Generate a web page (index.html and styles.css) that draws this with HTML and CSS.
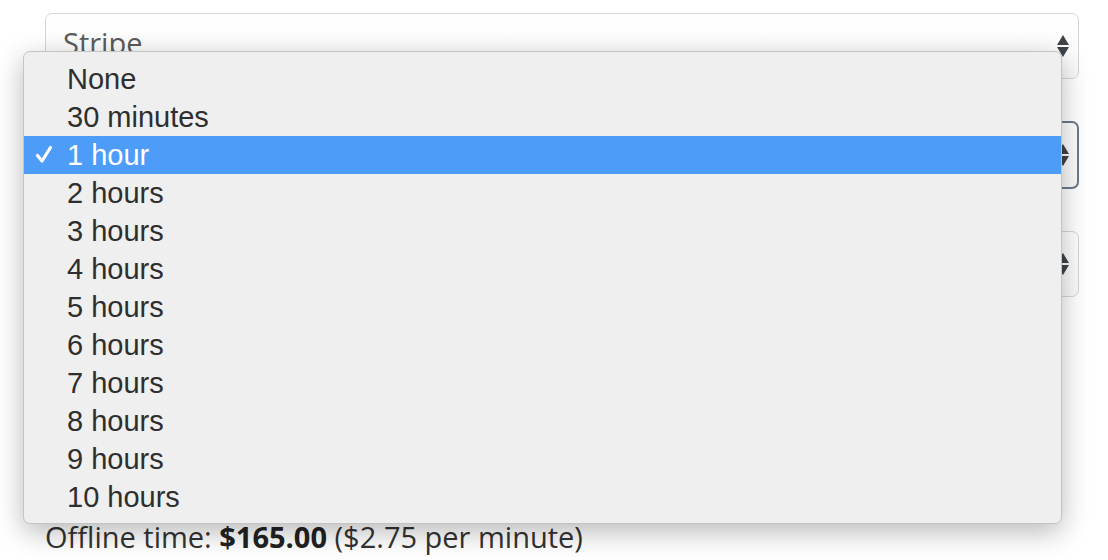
FILE: index.html
```html
<!DOCTYPE html>
<html>
<head>
<meta charset="utf-8">
<link rel="stylesheet" href="styles.css">
</head>
<body>
<div class="form">
  <div class="select">
    <span class="value">Stripe</span>
    <span class="arrows"><i class="up"></i><i class="down"></i></span>
  </div>
  <div class="select focused">
    <span class="value">1 hour</span>
    <span class="arrows"><i class="up"></i><i class="down"></i></span>
  </div>
  <div class="select">
    <span class="value">&nbsp;</span>
    <span class="arrows"><i class="up"></i><i class="down"></i></span>
  </div>
  <p class="summary first">Offline time: <b>$165.00</b> ($2.75 per minute)</p>
  <p class="summary">Invoice sent after the booking is complete</p>
</div>
<ul class="menu">
  <li>None</li>
  <li>30 minutes</li>
  <li class="selected"><svg class="check" width="18" height="19" viewBox="0 0 18 19"><path d="M2.5 10.5 L7 16 L15.5 2.5" fill="none" stroke="#ffffff" stroke-width="3.2" stroke-linecap="round" stroke-linejoin="round"/></svg>1 hour</li>
  <li>2 hours</li>
  <li>3 hours</li>
  <li>4 hours</li>
  <li>5 hours</li>
  <li>6 hours</li>
  <li>7 hours</li>
  <li>8 hours</li>
  <li>9 hours</li>
  <li>10 hours</li>
</ul>
</body>
</html>
```
FILE: styles.css
```css
html, body {
  margin: 0;
  padding: 0;
  background: #ffffff;
  overflow: hidden;
  height: 560px;
}
.form {
  padding: 13px 29px 0 45px;
  display: flex;
  flex-direction: column;
  gap: 42px;
  font-family: "Open Sans", "Noto Sans", sans-serif;
}
.select {
  border: 1px solid #d6d6d6;
  border-radius: 7px;
  box-sizing: border-box;
  height: 66px;
  display: flex;
  align-items: center;
  justify-content: space-between;
  padding: 0 9px 6px 17px;
  background: linear-gradient(#ffffff, #fafafa);
}
.select.focused {
  border: 2px solid #6d7a88;
  height: 68px;
  padding: 0 8px 0 16px;
}
.value {
  font-size: 29px;
  line-height: 40px;
  color: #5a5a5a;
  font-weight: 400;
}
.arrows {
  display: flex;
  flex-direction: column;
  gap: 2px;
  margin-top: 6px;
}
.focused .arrows { margin-top: 0; }
.arrows i {
  display: block;
  width: 0;
  height: 0;
  border-left: 6px solid transparent;
  border-right: 6px solid transparent;
}
.arrows .up { border-bottom: 10px solid #3f4448; }
.arrows .down { border-top: 10px solid #3f4448; }
.summary {
  margin: 0;
  font-size: 29px;
  color: #333333;
  line-height: 32px;
  white-space: nowrap;
}
.summary.first {
  margin-top: 182px;
}
.summary + .summary {
  margin-top: -33px;
}
.summary b { font-weight: 700; color: #222; }
.menu {
  position: absolute;
  left: 23px;
  top: 51px;
  width: 1039px;
  box-sizing: border-box;
  margin: 0;
  padding: 8px 0 7px;
  list-style: none;
  background: #efefef;
  border: 1px solid #c4c4c4;
  border-radius: 7px;
  box-shadow: 0 8px 28px rgba(0,0,0,0.28);
  font-family: "Liberation Sans", Arial, sans-serif;
  font-size: 29px;
  color: #2e2e2e;
}
.menu li {
  height: 38px;
  line-height: 38px;
  padding-left: 43px;
  position: relative;
}
.menu li.selected {
  background: #4d9cf8;
  color: #ffffff;
}
.check {
  position: absolute;
  left: 11px;
  top: 9px;
}
```
